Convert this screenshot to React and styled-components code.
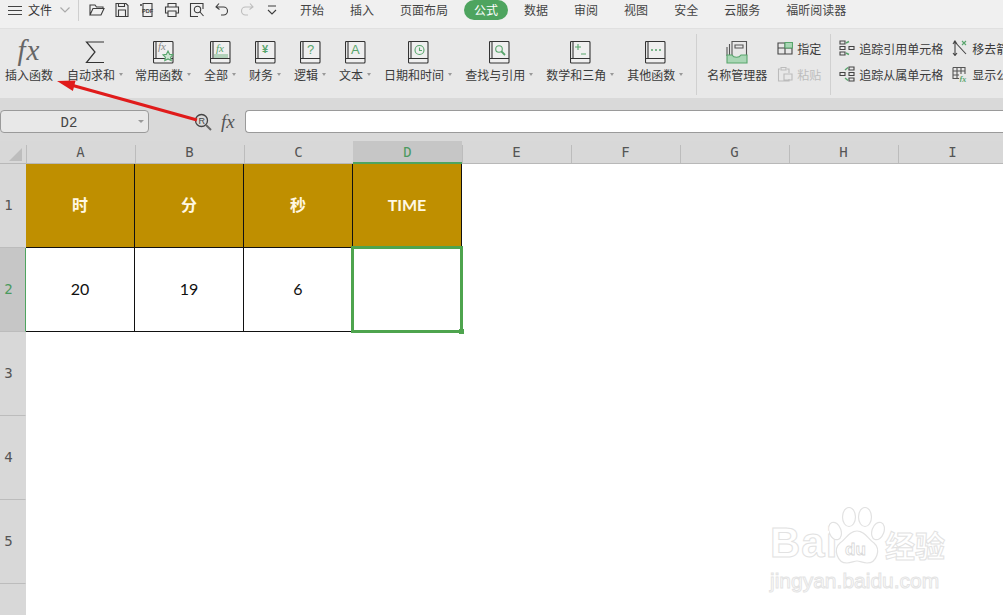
import styled, { createGlobalStyle } from "styled-components"

const CJK = `"Noto Sans CJK SC", "Noto Sans", sans-serif`
const INK = "#3d3d3d"
const GREEN = "#58a56c"

const Global = createGlobalStyle`
  html, body {
    margin: 0;
    height: 615px;
    overflow: hidden;
    background: #fff;
    font-family: ${CJK};
  }
  * { box-sizing: border-box; }
`

const Line = (props) => <svg width="16" height="16" viewBox="0 0 16 16" fill="none" stroke={INK} strokeWidth="1.1" {...props} />
const Book = ({ children }) => (
  <svg width="21" height="23" viewBox="0 0 21 23" fill="none" stroke="#333" strokeWidth="1.1">
    <rect x="0.5" y="0.5" width="19.5" height="21.5" rx="1" fill="#efefef" />
    <path d="M3 1V17M1 17.5H20" />
    {children}
  </svg>
)
const GreenFx = ({ fill = GREEN, y = 11, x = 6 }) => (
  <text x={x} y={y} fontFamily="Liberation Serif" fontStyle="italic" fontSize="11" fill={fill} stroke="none">fx</text>
)

const quickIcons = [
  <Line key="open"><path d="M1 13V3h5l1.5 2H14v1.5M1 13h11l3-6.5H4z" /></Line>,
  <Line key="save"><path d="M2 1.5h10l2 2v11H2zM4.5 14.5V8h7v6.5M4.5 1.5v3h6v-3" /></Line>,
  <Line key="pdf"><path d="M4 1.5h9v13H4zM2 2v2M1 3h2" /><text x="3" y="11" fontSize="5.5" fontFamily="Liberation Sans" fontWeight="700" fill={INK} stroke="none">PDF</text></Line>,
  <Line key="print"><path d="M4 5V1.5h8V5M4 11H1.5V5h13v6H12M4 9h8v5.5H4z" /></Line>,
  <Line key="preview"><path d="M14 7V1.5H1.5v13H9" /><circle cx="8.5" cy="7.5" r="3.2" /><path d="M11 10l3.5 4" /></Line>,
  <Line key="undo"><path d="M5 1.5L2 5l3.5 2.5M2.5 5h7a4 4 0 0 1 0 8H7" /></Line>,
  <Line key="redo" stroke="#bdbdbd"><path d="M11 1.5L14 5l-3.5 2.5M13.5 5h-7a4 4 0 0 0 0 8H9" /></Line>,
  <Line key="more" width="10" viewBox="0 0 10 16"><path d="M1 4h8M1 8l4 4 4-4" /></Line>,
]

const tabs = ["开始", "插入", "页面布局", "公式", "数据", "审阅", "视图", "安全", "云服务", "福昕阅读器"]

const functions = [
  { label: "常用函数", icon: <Book><GreenFx fill="#888" x="5" y="9" /><path d="M15 10l1.7 3.4 3.3.4-2.4 2.4.6 3.4-3.2-1.7-3.2 1.7.6-3.4-2.4-2.4 3.3-.4z" fill="#cfe6d4" stroke={GREEN} /></Book> },
  { label: "全部", icon: <Book><GreenFx y="11" /><path d="M4 14h14M4 16h14" stroke={GREEN} strokeWidth="0.8" /></Book> },
  { label: "财务", icon: <Book><text x="7" y="12" fontSize="11" fill={GREEN} stroke="none" fontFamily="Liberation Sans" fontWeight="700">¥</text></Book> },
  { label: "逻辑", icon: <Book><text x="7" y="13" fontSize="13" fill={GREEN} stroke="none" fontFamily="Liberation Sans">?</text></Book> },
  { label: "文本", icon: <Book><text x="6" y="13" fontSize="13" fill={GREEN} stroke="none" fontFamily="Liberation Sans">A</text></Book> },
  { label: "日期和时间", icon: <Book><circle cx="11.5" cy="9" r="4.5" stroke={GREEN} /><path d="M11.5 6.5V9.5H14" stroke={GREEN} /></Book> },
  { label: "查找与引用", icon: <Book><circle cx="10" cy="8" r="3.3" stroke={GREEN} /><path d="M12.5 10.5l3.5 3.5" stroke={GREEN} strokeWidth="1.8" /></Book> },
  { label: "数学和三角", icon: <Book><path d="M5 6h6M8 3v6M11 13h5" stroke={GREEN} /></Book> },
  { label: "其他函数", icon: <Book><path d="M6 9h2M10 9h2M14 9h2" stroke={GREEN} strokeWidth="1.4" /></Book> },
]

const traceRows = [
  {
    label: "追踪引用单元格",
    icon: <Line stroke="#444"><path d="M1 1h5v3H1zM1 6.5h5v3H1zM1 12h5v3H1zM10 6.5h5v3h-5z" /><path d="M7 3l3-1.5M7 13l3 1.5" stroke={GREEN} strokeWidth="1.4" /></Line>,
  },
  {
    label: "追踪从属单元格",
    icon: <Line stroke="#444"><path d="M10 1h5v3h-5zM10 6.5h5v3h-5zM10 12h5v3h-5zM1 6.5h5v3H1z" /><path d="M6 4l3-2.5M6 12l3 2.5" stroke={GREEN} strokeWidth="1.4" /></Line>,
  },
]
const clearRows = [
  {
    label: "移去箭头",
    icon: <Line stroke="#444"><path d="M3 2v13M1 4l2-3 2 3M1 13l2 2.5 2-2.5M2 1l12 13" /><path d="M10 1l4 4M14 1l-4 4" stroke={GREEN} /></Line>,
  },
  {
    label: "显示公式",
    icon: <Line stroke="#555"><path d="M1 1.5h12V8M1 1.5v11h6M5 1.5v11M9 1.5V8M1 5h12M1 9h6" /><text x="7.5" y="15.5" fontSize="8" fontStyle="italic" fontFamily="Liberation Serif" fontWeight="700" fill={GREEN} stroke="none">fx</text></Line>,
  },
]

const columns = ["A", "B", "C", "D", "E", "F", "G", "H", "I"]
const headerCells = ["时", "分", "秒", "TIME"]
const dataCells = ["20", "19", "6", ""]

const App = () => {
  return (
    <Page>
      <Global />
      <TabBar>
        <Hamburger><i /><i /><i /></Hamburger>
        <FileLabel>文件</FileLabel>
        <svg width="10" height="6" viewBox="0 0 10 6" fill="none" stroke="#aaa" strokeWidth="1.2"><path d="M0.5 0.5L5 5l4.5-4.5" /></svg>
        <BarDivider />
        <QuickTools>{quickIcons}</QuickTools>
        <Tabs>
          {tabs.map((t) => (
            <Tab key={t} $active={t === "公式"}>{t}</Tab>
          ))}
        </Tabs>
      </TabBar>

      <Ribbon>
        <InsertButton>
          <BigFx>fx</BigFx>
          <ToolLabel>插入函数</ToolLabel>
        </InsertButton>
        <AutoSumButton>
          <IconSlot>
            <svg width="20" height="23" viewBox="0 0 20 23" fill="none" stroke="#333" strokeWidth="1.2"><path d="M19 1H1.5L10 11 1.5 21.5H19" /></svg>
          </IconSlot>
          <ToolLabel $caret>自动求和</ToolLabel>
        </AutoSumButton>
        {functions.map((f) => (
          <ToolButton key={f.label}>
            <IconSlot>{f.icon}</IconSlot>
            <ToolLabel $caret>{f.label}</ToolLabel>
          </ToolButton>
        ))}
        <RibbonDivider $lead={0} />
        <ToolButton>
          <IconSlot>
            <svg width="22" height="24" viewBox="0 0 22 24" fill="none" stroke="#333" strokeWidth="1.1">
              <path d="M6 16V1.5h14.5V16M3.5 16V4M1 16V7M9 5h8v3H9z" stroke="#555" />
              <path d="M1 15h5a5 4 0 0 0 9 0h6v8H1z" fill="#a9d6b5" stroke={GREEN} />
            </svg>
          </IconSlot>
          <ToolLabel>名称管理器</ToolLabel>
        </ToolButton>
        <SideStack $shift={-3}>
          <SideRow>
            <Line stroke="#444"><path d="M1 3h14v11H1zM1 8h14M8 3v11" /><path d="M8 2.5h7.5V8H8z" fill="#a9d6b5" stroke={GREEN} /></Line>
            指定
          </SideRow>
          <SideRow $disabled>
            <Line stroke="#bbb"><path d="M3 3H1.5v12H12v-2M10 3h2v4M4 1.5h5V4H4zM7 8h8v6H7z" /></Line>
            粘贴
          </SideRow>
        </SideStack>
        <RibbonDivider $lead={-4} />
        <SideStack $shift={-2}>
          {traceRows.map((r) => <SideRow key={r.label}>{r.icon}{r.label}</SideRow>)}
        </SideStack>
        <SideStack $shift={-4}>
          {clearRows.map((r) => <SideRow key={r.label}>{r.icon}{r.label}</SideRow>)}
        </SideStack>
      </Ribbon>

      <FormulaBar>
        <NameBox>
          <NameText>D2</NameText>
          <NameCaret />
        </NameBox>
        <ZoomIcon>
          <svg width="18" height="18" viewBox="0 0 18 18" fill="none" stroke="#444" strokeWidth="1.3">
            <circle cx="7.5" cy="7.5" r="6" />
            <path d="M12 12l5 5" strokeWidth="2" stroke="#666" />
            <text x="4.5" y="11" fontSize="9" fontFamily="Liberation Sans" fill="#444" stroke="none">R</text>
          </svg>
        </ZoomIcon>
        <FormulaFx>fx</FormulaFx>
        <FormulaInput />
      </FormulaBar>

      <Sheet>
        <Corner><CornerMark /></Corner>
        {columns.map((c) => (
          <ColumnHead key={c} $active={c === "D"}>{c}</ColumnHead>
        ))}

        <RowHead>1</RowHead>
        {headerCells.map((t) => (
          <TitleCell key={t}>{t}</TitleCell>
        ))}
        {columns.slice(4).map((c) => <BlankCell key={c} />)}

        <RowHead $active>2</RowHead>
        {dataCells.map((t, i) => (
          <DataCell key={i}>
            {t}
            {i === 3 && <Selection><Handle /></Selection>}
          </DataCell>
        ))}
        {columns.slice(4).map((c) => <BlankCell key={c} />)}

        {[3, 4, 5].map((n) => (
          <SheetRow key={n}>
            <RowHead>{n}</RowHead>
            {columns.map((c) => <BlankCell key={c} />)}
          </SheetRow>
        ))}
        <RowHead />
      </Sheet>

      <Arrow width="1003" height="615" viewBox="0 0 1003 615">
        <path d="M197 120L72 85.2" stroke="#e01b1b" strokeWidth="3.2" fill="none" />
        <path d="M57 81L75.6 80.5L72.9 91z" fill="#e01b1b" />
      </Arrow>

      <Watermark>
        <BrandRow>
          <BrandWord>Bai</BrandWord>
          <PawMark width="56" height="62" viewBox="0 0 56 62" fill="#fff" stroke="#e2e2e2" strokeWidth="1.2">
            <ellipse cx="6" cy="24" rx="6" ry="9" transform="rotate(-20 6 24)" />
            <ellipse cx="20" cy="10" rx="6.5" ry="9.5" />
            <ellipse cx="36" cy="10" rx="6.5" ry="9.5" />
            <ellipse cx="49" cy="24" rx="6" ry="9" transform="rotate(20 49 24)" />
            <path d="M28 24c8 0 11 8 17 12 7 6 3 20-7 20-4 0-7-2-10-2s-6 2-10 2c-10 0-14-14-7-20 6-4 9-12 17-12z" />
            <text x="16" y="48" fontSize="17" fontWeight="700" fontFamily="Liberation Sans" fill="#fff" stroke="#d8d8d8" strokeWidth="0.8">du</text>
          </PawMark>
          <BrandCjk>经验</BrandCjk>
        </BrandRow>
        <BrandUrl>jingyan.baidu.com</BrandUrl>
      </Watermark>
    </Page>
  )
}

export default App

const Page = styled.div`
  position: relative;
  width: 1003px;
  height: 615px;
  overflow: hidden;
  color: #333;
  font-size: 12px;
`
const TabBar = styled.div`
  display: flex;
  align-items: center;
  height: 29px;
  padding: 0 0 8px 8px;
  background: #f0f0f0;
  border-bottom: 1px solid #e0e0e0;
`
const Hamburger = styled.div`
  display: flex;
  flex-direction: column;
  gap: 3px;
  width: 14px;

  i {
    display: block;
    height: 1px;
    background: #444;
  }
`
const FileLabel = styled.span`
  margin: 0 8px 0 6px;
  font-size: 12px;
  line-height: 20px;
`
const BarDivider = styled.span`
  width: 1px;
  height: 22px;
  margin: 0 10px 0 8px;
  background: #cfcfcf;
`
const QuickTools = styled.div`
  display: flex;
  align-items: center;
  gap: 9px;
  width: 191px;

  svg:last-child {
    margin-left: 3px;
  }
`
const Tabs = styled.div`
  display: flex;
  gap: 6px;
  margin-left: 10px;
`
const Tab = styled.span`
  padding: 0 10px;
  height: 20px;
  line-height: 20px;
  border-radius: 10px;
  font-size: 12px;
  color: ${(p) => (p.$active ? "#fff" : "#444")};
  background: ${(p) => (p.$active ? "#4ea45f" : "transparent")};
`
const Ribbon = styled.div`
  display: flex;
  align-items: stretch;
  gap: 13px;
  height: 69px;
  padding: 9px 0 3px 5px;
  background: #e8e8e8;
  white-space: nowrap;
`
const ToolButton = styled.div`
  display: flex;
  flex-direction: column;
  align-items: center;
  flex: none;
`
const InsertButton = styled(ToolButton)`
  margin-right: 1px;
`
const AutoSumButton = styled(ToolButton)`
  margin-right: -1px;
`
const IconSlot = styled.div`
  display: flex;
  align-items: center;
  height: 28px;
`
const BigFx = styled.div`
  height: 28px;
  font-family: "Liberation Serif", serif;
  font-style: italic;
  font-size: 29px;
  line-height: 24px;
  letter-spacing: 1px;
  color: #666;
`
const ToolLabel = styled.span`
  display: flex;
  align-items: center;
  margin-top: -1px;
  height: 18px;
  font-size: 12px;
  color: #3a3a3a;

  ${(p) =>
    p.$caret &&
    `&::after {
      content: "";
      margin-left: 4px;
      border: 2.5px solid transparent;
      border-top: 3px solid #999;
      border-bottom: 0;
    }`}
`
const RibbonDivider = styled.span`
  flex: none;
  width: 1px;
  margin: -4px -3px 0 ${(p) => p.$lead}px;
  background: #d0d0d0;
`
const SideStack = styled.div`
  display: flex;
  flex-direction: column;
  gap: 8px;
  padding-top: 1px;
  flex: none;
  margin-left: ${(p) => p.$shift}px;
`
const SideRow = styled.div`
  display: flex;
  align-items: center;
  gap: 4px;
  height: 18px;
  font-size: 12px;
  color: ${(p) => (p.$disabled ? "#bdbdbd" : "#3a3a3a")};
`
const FormulaBar = styled.div`
  display: flex;
  align-items: center;
  height: 43px;
  padding-top: 4px;
  background: #d9d9d9;
`
const NameBox = styled.div`
  position: relative;
  display: flex;
  align-items: center;
  justify-content: center;
  width: 149px;
  height: 23px;
  padding: 2px 11px 0 0;
  background: #e8e8e8;
  border: 1px solid #9a9a9a;
  border-radius: 4px;
`
const NameText = styled.span`
  font-family: "Liberation Mono", "DejaVu Sans Mono", monospace;
  font-size: 14px;
  color: #444;
`
const NameCaret = styled.span`
  position: absolute;
  right: 4px;
  top: 9px;
  border: 3px solid transparent;
  border-top: 3px solid #999;
  border-bottom: 0;
`
const ZoomIcon = styled.div`
  display: flex;
  margin-left: 45px;
`
const FormulaFx = styled.span`
  margin: 0 7px 0 9px;
  width: 17px;
  font-family: "Liberation Serif", serif;
  font-style: italic;
  font-size: 19px;
  color: #555;
`
const FormulaInput = styled.div`
  flex: 1;
  height: 23px;
  background: #fff;
  border: 1px solid #9a9a9a;
  border-right: 0;
  border-radius: 4px 0 0 4px;
`
const Sheet = styled.div`
  display: grid;
  grid-template-columns: 26px repeat(9, 109px);
  grid-auto-rows: 84px;
  grid-template-rows: 23px 84px 84px;
  background: #fff;
`
const SheetRow = styled.div`
  display: contents;
`
const Corner = styled.div`
  background: #d8d8d8;
  border-bottom: 1px solid #b8b8b8;
  position: relative;
`
const CornerMark = styled.span`
  position: absolute;
  left: 9px;
  bottom: 2px;
  width: 13px;
  height: 13px;
  background: #bdbdbd;
  clip-path: polygon(100% 0, 100% 100%, 0 100%);
`
const ColumnHead = styled.div`
  display: flex;
  align-items: center;
  justify-content: center;
  font-family: "DejaVu Sans Mono", "Liberation Mono", monospace;
  font-size: 14px;
  color: ${(p) => (p.$active ? "#4b9a5f" : "#555")};
  background: ${(p) =>
    p.$active
      ? "#c6c6c6"
      : "linear-gradient(#d8d8d8 4px, #bcbcbc 4px) no-repeat left / 1px 100%, #d8d8d8"};
  border-bottom: ${(p) => (p.$active ? "2px solid #4ea45f" : "1px solid #b8b8b8")};
`
const RowHead = styled.div`
  display: flex;
  align-items: center;
  justify-content: center;
  padding: 0 8px 1px 0;
  font-family: "DejaVu Sans Mono", "Liberation Mono", monospace;
  font-size: 14px;
  color: ${(p) => (p.$active ? "#4b9a5f" : "#555")};
  background: ${(p) => (p.$active ? "#c6c6c6" : "#d8d8d8")};
  border-bottom: 1px solid #bcbcbc;
  border-right: 1px solid ${(p) => (p.$active ? "#4ea45f" : "#d8d8d8")};
`
const BlankCell = styled.div`
  background: #fff;
`
const TitleCell = styled.div`
  display: flex;
  align-items: center;
  justify-content: center;
  padding-bottom: 3px;
  background: #bf8f00;
  color: #fff8e4;
  font-family: "Lato", "Noto Sans CJK SC", sans-serif;
  font-weight: 700;
  font-size: 16px;
  border-right: 1px solid #111;
  border-bottom: 1px solid #111;
`
const DataCell = styled.div`
  position: relative;
  display: flex;
  align-items: center;
  justify-content: center;
  padding-bottom: 2px;
  background: #fff;
  color: #111;
  font-family: "Lato", "Noto Sans", sans-serif;
  font-size: 16px;
  border-right: 1px solid #111;
  border-bottom: 1px solid #111;
`
const Selection = styled.div`
  position: absolute;
  left: -2px;
  top: -2px;
  right: -2px;
  bottom: -2px;
  border: 3px solid #4ea44e;
`
const Handle = styled.span`
  position: absolute;
  right: -4px;
  bottom: -4px;
  width: 5px;
  height: 5px;
  background: #4ea44e;
`
const Arrow = styled.svg`
  position: absolute;
  left: 0;
  top: 0;
  pointer-events: none;
`
const Watermark = styled.div`
  position: absolute;
  left: 770px;
  top: 507px;
  width: 190px;
  pointer-events: none;
`
const BrandRow = styled.div`
  display: flex;
  align-items: flex-end;
  height: 62px;
  white-space: nowrap;
`
const PawMark = styled.svg`
  flex: none;
  margin-left: -1px;
`
const BrandWord = styled.span`
  flex: none;
  width: 60px;
  font-family: "Liberation Sans", sans-serif;
  font-weight: 700;
  font-size: 42px;
  line-height: 52px;
  letter-spacing: 1px;
  color: #fff;
  -webkit-text-stroke: 1px #e2e2e2;
`
const BrandCjk = styled.span`
  flex: none;
  font-family: "Noto Sans CJK SC", sans-serif;
  font-weight: 700;
  font-size: 30px;
  line-height: 50px;
  color: #fff;
  -webkit-text-stroke: 1px #e2e2e2;
`
const BrandUrl = styled.div`
  font-family: "Liberation Sans", sans-serif;
  font-size: 21px;
  line-height: 24px;
  color: #fff;
  -webkit-text-stroke: 1px #e4e4e4;
  white-space: nowrap;
`
